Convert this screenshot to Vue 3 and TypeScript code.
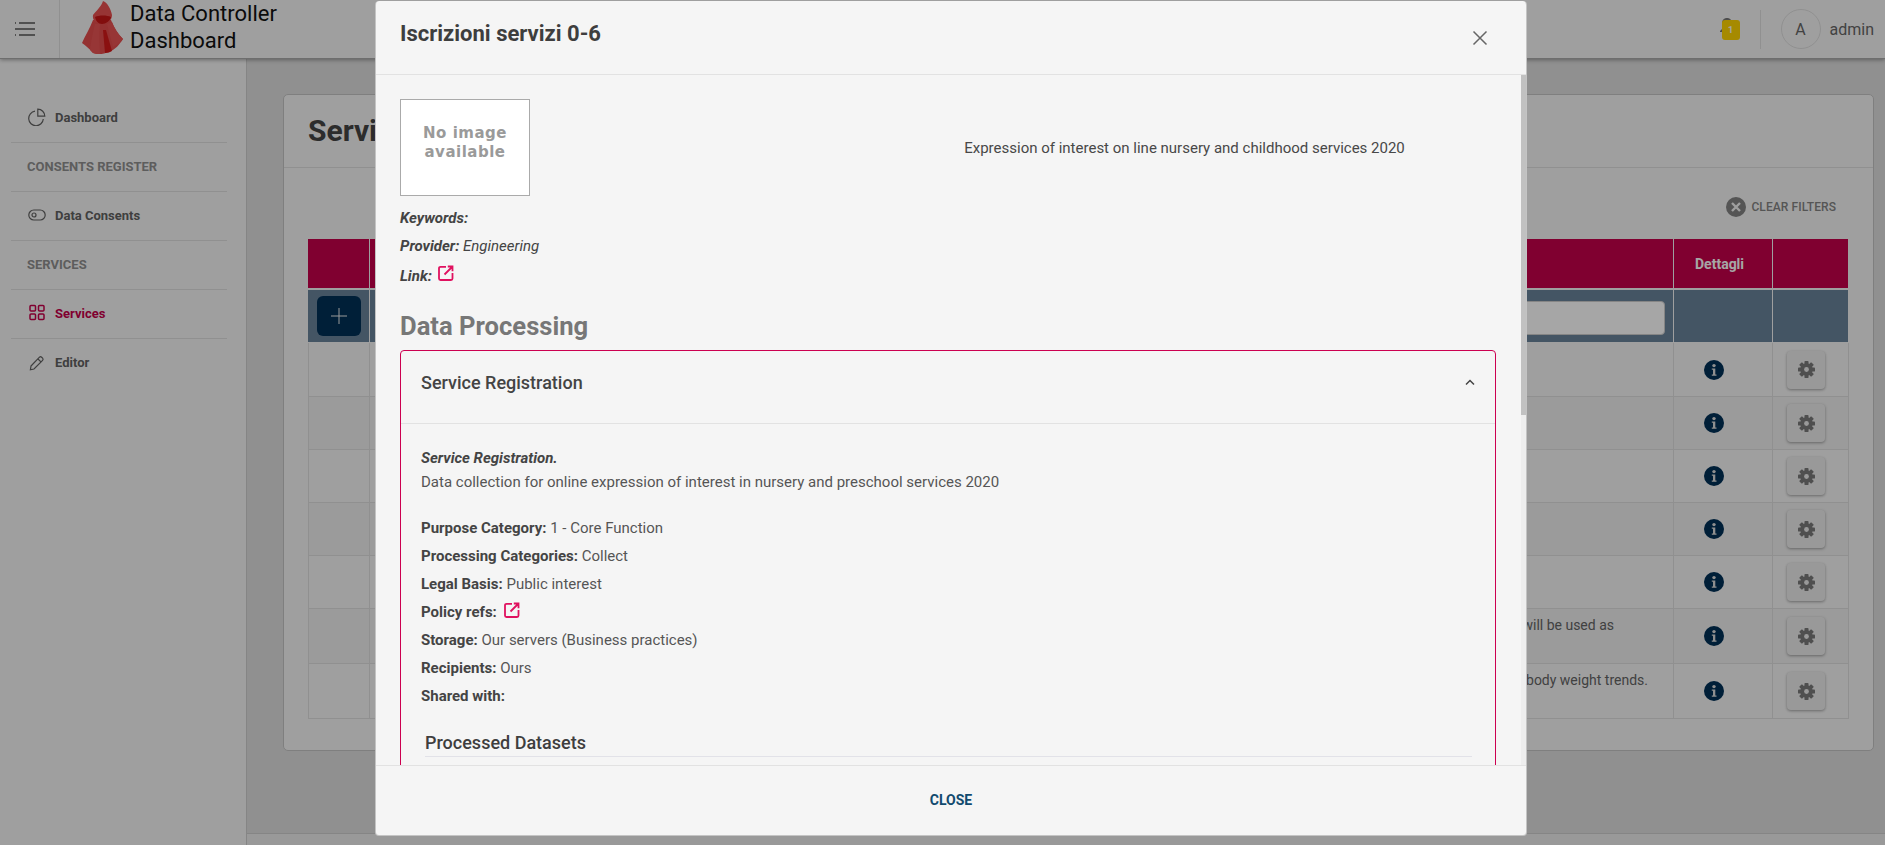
<script setup lang="ts">
interface Row { text: string; pad: number; tall: boolean }
const rows: Row[] = [
  { text: '', pad: 0, tall: false },
  { text: '', pad: 0, tall: false },
  { text: '', pad: 0, tall: false },
  { text: '', pad: 0, tall: false },
  { text: '', pad: 0, tall: false },
  { text: 'will be used as', pad: 59, tall: true },
  { text: 'body weight trends.', pad: 25, tall: true },
]
const facts: { label: string; value: string; link?: boolean }[] = [
  { label: 'Purpose Category:', value: '1 - Core Function' },
  { label: 'Processing Categories:', value: 'Collect' },
  { label: 'Legal Basis:', value: 'Public interest' },
  { label: 'Policy refs:', value: '', link: true },
  { label: 'Storage:', value: 'Our servers (Business practices)' },
  { label: 'Recipients:', value: 'Ours' },
  { label: 'Shared with:', value: '' },
]
const teeth = [0, 45, 90, 135]
</script>

<template>
  <div class="app">
    <header class="topbar">
      <button class="burger" aria-label="menu">
        <svg width="22" height="16" viewBox="0 0 22 16" fill="none" stroke="#7d7d7d" stroke-width="2">
          <path d="M1 2h1M5 2h16M1 8h20M1 14h1M5 14h16" />
        </svg>
      </button>
      <div class="brand">
        <svg class="logo" width="42" height="56" viewBox="0 0 42 56">
          <path fill="#e34c4c" d="M11 20C8 28 3 36 0 43c4 3 8 6 11 10 5 2 11 1 16-1 6-2 11-8 14-13-5-5-9-11-12-19z" />
          <path fill="#e85454" d="M13 24c-2 8-4 18-5 26l3 3c2 1 5 1 7 1-1-10-1-21 0-30z" />
          <path fill="#d41a1a" d="M21 30l2 23c3 0 5-1 7-2-2-7-4-14-6-21z" />
          <path fill="#e85252" d="M25 24l6 23c4-2 7-5 10-8-5-5-8-10-11-17z" />
          <path fill="#e85050" d="M21 1c4 1 8 8 9 14 0 5-4 9-10 9s-10-4-9-9c3-4 8-8 10-14z" />
          <path fill="#c81414" d="M13 17c4-2 12-2 16 0-1 4-5 7-9 7s-6-3-7-7z" />
        </svg>
        <div class="brand-name">Data Controller<br />Dashboard</div>
      </div>
      <div class="top-right">
        <div class="bell">
          <svg width="16" height="18" viewBox="0 0 16 18"><path fill="#777" d="M8 0c3 0 5 2 5 6v5l2 2v1H1v-1l2-2V6c0-4 2-6 5-6zM6 15h4a2 2 0 0 1-4 0z" /></svg>
          <span class="badge">1</span>
        </div>
        <div class="user">
          <span class="avatar">A</span>
          <span class="uname">admin</span>
        </div>
      </div>
    </header>

    <div class="below">
      <aside class="sidebar">
        <a class="nav">
          <svg class="nav-ic" viewBox="0 0 18 18" fill="none" stroke="currentColor" stroke-width="1.2">
            <path d="M7 3.200A7.300 7.300 0 1 0 15.300 11" /><path d="M9.800 1.200a7 7 0 0 1 7 7h-7z" />
          </svg>
          Dashboard
        </a>
        <div class="nav title">CONSENTS REGISTER</div>
        <a class="nav">
          <svg class="nav-ic" viewBox="0 0 18 18" fill="none" stroke="currentColor" stroke-width="1.2">
            <rect x="0.8" y="4" width="16.400" height="10" rx="5" /><circle cx="6" cy="9" r="2" />
          </svg>
          Data Consents
        </a>
        <div class="nav title">SERVICES</div>
        <a class="nav active">
          <svg class="nav-ic" viewBox="0 0 18 18" fill="none" stroke="currentColor" stroke-width="1.5">
            <rect x="2" y="1.500" width="5.500" height="5.500" rx="1" /><rect x="10.500" y="1.500" width="5.500" height="5.500" rx="1" />
            <rect x="2" y="10" width="5.500" height="5.500" rx="1" /><rect x="10.500" y="10" width="5.500" height="5.500" rx="1" />
          </svg>
          Services
        </a>
        <a class="nav last">
          <svg class="nav-ic" viewBox="0 0 18 18" fill="none" stroke="currentColor" stroke-width="1.2">
            <path d="M3 12 11.500 3.200a1.500 1.500 0 0 1 2.100 0l1 1a1.500 1.500 0 0 1 0 2.100L6 15l-3.600.8z" /><path d="M10 5l3.200 3.200" />
          </svg>
          Editor
        </a>
      </aside>

      <div class="content">
        <main class="page">
          <section class="card">
            <div class="card-head"><h1>Services</h1></div>
            <div class="card-body">
              <div class="filters">
                <svg width="20" height="20" viewBox="0 0 20 20">
                  <circle cx="10" cy="10" r="10" fill="#838383" />
                  <path d="M6 6l8 8M14 6l-8 8" stroke="#f5f5f5" stroke-width="2.400" />
                </svg>
                <span>CLEAR FILTERS</span>
              </div>
              <table class="grid">
                <colgroup>
                  <col class="c1" /><col class="c2" /><col /><col class="c4" /><col class="c5" />
                </colgroup>
                <thead>
                  <tr class="h-row">
                    <th></th><th></th><th></th><th class="det">Dettagli</th><th></th>
                  </tr>
                  <tr class="f-row">
                    <th class="add-cell"><button class="add" aria-label="add">
                      <svg width="18" height="18" viewBox="0 0 18 18"><path d="M9 1v16M1 9h16" stroke="#eee" stroke-width="1" /></svg>
                    </button></th>
                    <th></th>
                    <th class="inp-cell"><input class="inp" type="text" /></th>
                    <th></th><th></th>
                  </tr>
                </thead>
                <tbody>
                  <tr v-for="(r, i) in rows" :key="i" :class="{ even: i % 2 === 1, tall: r.tall }">
                    <td></td><td></td>
                    <td class="desc" :style="{ paddingRight: r.pad + 'px' }">{{ r.text }}</td>
                    <td class="info-cell">
                      <svg width="20" height="20" viewBox="0 0 20 20">
                        <circle cx="10" cy="10" r="10" fill="#003057" />
                        <circle cx="10" cy="5.600" r="1.700" fill="#dcdcdc" />
                        <path d="M7.800 8.400h3.500v6h1.200v1.400H7.800v-1.400h1.200V9.800H7.800z" fill="#dcdcdc" />
                      </svg>
                    </td>
                    <td class="gear-cell">
                      <button class="gear" aria-label="settings">
                        <svg width="17" height="17" viewBox="0 0 20 20">
                          <g fill="#7a7a7a">
                            <rect v-for="t in teeth" :key="t" x="7.600" y="0" width="4.800" height="20" rx="1" :transform="`rotate(${t} 10 10)`" />
                          </g>
                          <circle cx="10" cy="10" r="7.300" fill="#7a7a7a" />
                          <circle cx="10" cy="10" r="2.800" fill="#ececec" />
                        </svg>
                      </button>
                    </td>
                  </tr>
                </tbody>
              </table>
            </div>
          </section>
        </main>
        <footer class="foot"></footer>
      </div>
    </div>

    <div class="backdrop">
      <div class="modal">
        <div class="m-head">
          <h2>Iscrizioni servizi 0-6</h2>
          <svg class="m-x" width="16" height="16" viewBox="0 0 16 16"><path d="M1.500 1.500l13 13M14.500 1.500l-13 13" stroke="#666" stroke-width="1.500" /></svg>
        </div>
        <div class="m-body">
          <div class="intro">
            <div class="intro-left">
              <div class="noimg">No image<br />available</div>
            </div>
            <p class="intro-desc">Expression of interest on line nursery and childhood services 2020</p>
          </div>
          <p class="meta"><b>Keywords:</b></p>
          <p class="meta"><b>Provider:</b> Engineering</p>
          <p class="meta meta-link"><b>Link:</b>
            <svg class="ext" width="16" height="16" viewBox="0 0 16 16" fill="none" stroke="#e0115f" stroke-width="1.800">
              <path d="M8 1.800H2.500a1.500 1.500 0 0 0-1.500 1.500v10.200a1.500 1.500 0 0 0 1.500 1.500h10.500a1.500 1.500 0 0 0 1.500-1.500V8" />
              <path d="M6.500 9.500 14 2M9.800 1.500h4.700v4.700" />
            </svg>
          </p>
          <h3 class="dp">Data Processing</h3>
          <div class="acc">
            <div class="acc-head">
              <span>Service Registration</span>
              <svg width="10" height="7" viewBox="0 0 10 7" fill="none" stroke="#444" stroke-width="1.500"><path d="M1 5.500 5 1.500l4 4" /></svg>
            </div>
            <div class="acc-body">
              <p class="lead"><b><i>Service Registration.</i></b></p>
              <p class="lead-2">Data collection for online expression of interest in nursery and preschool services 2020</p>
              <p v-for="f in facts" :key="f.label" class="fact">
                <b>{{ f.label }}</b> {{ f.value }}
                <svg v-if="f.link" class="ext" width="16" height="16" viewBox="0 0 16 16" fill="none" stroke="#e0115f" stroke-width="1.800">
                  <path d="M8 1.800H2.500a1.500 1.500 0 0 0-1.500 1.500v10.200a1.500 1.500 0 0 0 1.500 1.500h10.500a1.500 1.500 0 0 0 1.500-1.500V8" />
                  <path d="M6.500 9.500 14 2M9.800 1.500h4.700v4.700" />
                </svg>
              </p>
              <h4 class="pd">Processed Datasets</h4>
            </div>
          </div>
          <div class="sb-track"><div class="sb-thumb"></div></div>
        </div>
        <div class="m-foot"><button class="close">CLOSE</button></div>
      </div>
    </div>
  </div>
</template>

<style>
html, body { margin: 0; height: 100%; overflow: hidden; }
</style>

<style scoped>
.app {
  position: relative;
  width: 100%;
  height: 845px;
  overflow: hidden;
  font-family: Roboto, "Liberation Sans", sans-serif;
  background: #ddd;
  display: flex;
  flex-direction: column;
}
button { font-family: inherit; border: 0; background: none; padding: 0; }
p, h1, h2, h3, h4 { margin: 0; }

.topbar {
  height: 59px;
  flex: none;
  box-sizing: border-box;
  background: #f5f5f5;
  display: flex;
  align-items: stretch;
  border-bottom: 1px solid #aaa;
  box-shadow: 0 1px 4px rgba(0, 0, 0, .35);
  position: relative;
  z-index: 2;
}
.burger { border-right: 1px solid #ddd; display: flex; align-items: center; padding-left: 14px; box-sizing: content-box; width: 45px; }
.brand { display: flex; align-items: flex-start; padding-left: 22px; }
.logo { display: block; }
.brand-name { margin: 1px 0 0 6px; font-size: 22px; line-height: 26.500px; color: #111; }
.top-right { margin-left: auto; display: flex; align-items: center; }
.bell { position: relative; width: 21px; height: 22px; margin-right: 20px; }
.badge {
  position: absolute; left: 3px; top: 2px;
  width: 18px; height: 20px; border-radius: 3px;
  background: #ffd400; color: #fff;
  font-size: 9px; font-weight: 700; line-height: 20px; text-align: center;
}
.user { display: flex; align-items: center; height: 39px; border-left: 1px solid #ddd; padding-left: 20px; padding-right: 11px; }
.avatar {
  width: 38px; height: 38px; border: 1px solid #ddd; border-radius: 50%;
  display: flex; align-items: center; justify-content: center;
  font-size: 16px; color: #666;
}
.uname { margin-left: 9px; font-size: 16px; color: #666; }

.below { flex: 1; display: flex; min-height: 0; }
.sidebar {
  width: 247px; flex: none; box-sizing: border-box;
  background: #f5f5f5; border-right: 1px solid #ccc;
  padding: 35px 19px 0 11px;
}
.nav {
  height: 49px; box-sizing: border-box;
  display: flex; align-items: center;
  border-bottom: 1px solid #ddd;
  padding: 0 0 2px 16px;
  font-size: 13px; font-weight: 700; color: #616161;
}
.nav.last { border-bottom: 0; }
.nav.title { font-size: 13px; color: #8f8f8f; }
.nav.active { color: #c5004a; }
.nav-ic { width: 18px; height: 18px; margin-left: 1px; margin-right: 9px; flex: none; }

.content { flex: 1; min-width: 0; display: flex; flex-direction: column; }
.page { flex: 1; min-height: 0; padding: 35px 11px 0 36px; }
.card {
  height: 657px; box-sizing: border-box;
  background: #f5f5f5; border: 1px solid #c4c4c4; border-radius: 5px;
}
.card-head { height: 73px; box-sizing: border-box; border-bottom: 1px solid #ddd; padding: 15px 24px 0; }
.card-head h1 { font-size: 30px; line-height: 42px; font-weight: 700; color: #444; }
.card-body { padding: 0 24px; }
.filters { height: 71px; box-sizing: border-box; display: flex; justify-content: flex-end; align-items: center; gap: 5px; padding: 7px 13px 0 0; font-size: 12px; font-weight: 500; letter-spacing: .08px; color: #838383; }
.grid { width: 1541px; border-spacing: 0; border-collapse: separate; table-layout: fixed; }
.c1 { width: 62px; }
.c2 { width: 331px; }
.c4 { width: 99px; }
.c5 { width: 76px; }
.h-row th { height: 51px; box-sizing: border-box; background: #c5004a; border-right: 1px solid #f5f5f5; border-bottom: 2px solid #f5f5f5; padding: 0; color: #fff; font-size: 14px; font-weight: 700; text-align: left; }
.h-row .det { padding-left: 21px; }
.f-row th { height: 53px; box-sizing: border-box; background: #69839a; border-right: 1px solid #f5f5f5; border-bottom: 1px solid #f5f5f5; padding: 0; }
.add-cell { padding-left: 9px !important; }
.add { width: 44px; height: 40px; border-radius: 6px; background: #003057; display: flex; align-items: center; justify-content: center; }
.inp-cell { padding: 4px 8px 0 0 !important; }
.inp { display: block; width: 100%; height: 34px; box-sizing: border-box; background: #fff; border: 1px solid #ccc; border-radius: 4px; }
tbody tr { height: 53px; }
tbody tr:first-child { height: 54px; }
tbody tr.tall { height: 55px; }
tbody tr.even td { background: #eee; }
tbody td { box-sizing: border-box; padding: 0; border-right: 1px solid #ddd; border-bottom: 1px solid #ddd; }
tbody td:first-child { border-left: 1px solid #ddd; }
.desc { text-align: right; vertical-align: top; padding-top: 7px !important; font-size: 14px; line-height: 18px; color: #646464; }
.info-cell { padding-left: 30px !important; vertical-align: middle; }
.info-cell svg { display: block; }
.gear-cell { padding-left: 14px !important; vertical-align: middle; }
.gear {
  width: 38px; height: 38px; border-radius: 4px; background: #ececec;
  box-shadow: 0 1px 3px rgba(0, 0, 0, .35);
  display: flex; align-items: center; justify-content: center;
}
.foot { height: 12px; flex: none; background: #ebebeb; border-top: 1px solid #ccc; box-sizing: border-box; }

.backdrop {
  position: absolute; inset: 0; z-index: 5;
  background: rgba(0, 0, 0, .35);
  display: flex; justify-content: center; align-items: flex-start;
  padding: 1px 0 0 17px;
}
.modal {
  width: 1152px; height: 835px; box-sizing: border-box;
  background: #f5f5f5; border-radius: 4px; overflow: hidden;
  display: flex; flex-direction: column;
  border: 1px solid rgba(0, 0, 0, .2);
  border-top: 0;
}
.m-head {
  height: 74px; flex: none; box-sizing: border-box;
  border-bottom: 1px solid #e2e2e2;
  display: flex; justify-content: space-between;
  padding: 20px 38px 0 24px;
}
.m-head h2 { font-size: 22px; line-height: 26px; font-weight: 700; color: #3e3e3e; }
.m-x { margin-top: 9px; }
.m-body { position: relative; flex: 1; min-height: 0; overflow: hidden; padding: 24px 30px 0 24px; color: #444; font-size: 15px; }
.intro { display: flex; }
.intro-left { width: 473px; flex: none; }
.noimg {
  width: 130px; height: 97px; box-sizing: border-box;
  background: #fff; border: 1px solid #aaa;
  padding-top: 24px; text-align: center;
  font-family: "DejaVu Sans", sans-serif; font-weight: 700; font-size: 15px; line-height: 19px;
  letter-spacing: .5px; color: #9a9a9a;
}
.intro-desc { flex: 1; text-align: center; line-height: 20px; padding-top: 39px; color: #484848; }
.meta { font-style: italic; line-height: 28px; height: 28px; }
.intro + .meta { margin-top: 8px; }
.meta-link { padding-top: 2px; box-sizing: border-box; }
.meta-link .ext { margin-left: 6px; vertical-align: 0; }
.ext { vertical-align: -1px; margin-left: 3px; }
.dp { font-size: 25.600px; line-height: 34px; font-weight: 700; color: #777; margin-top: 21px; }
.acc { margin-top: 7px; border: 1px solid #cc0050; border-radius: 4px; min-height: 700px; }
.acc-head {
  height: 73px; box-sizing: border-box; border-bottom: 1px solid #e2e2e2;
  display: flex; align-items: center; justify-content: space-between;
  padding: 0 20px 10px 20px;
  font-size: 18px; font-weight: 500; color: #444;
}
.acc-body { padding: 22px 20px; }
.lead, .lead-2 { line-height: 24px; }
.lead-2 { color: #555; margin-bottom: 20px; }
.fact { line-height: 28px; height: 28px; color: #555; }
.fact b { color: #444; }
.pd { margin: 20px 0 0 4px; border-bottom: 1px solid #e2e2e8; width: 1047px; font-size: 18px; line-height: 26px; font-weight: 500; color: #3e3e3e; }
.sb-track { position: absolute; right: 0; top: 0; bottom: 0; width: 5px; background: #eeeeee; }
.sb-thumb { height: 340px; background: #c1c1c1; }
.m-foot { height: 70px; flex: none; box-sizing: border-box; border-top: 1px solid #e2e2e2; display: flex; align-items: center; justify-content: center; padding-bottom: 2px; }
.close { font-size: 14px; font-weight: 700; color: #114a6e; }
</style>
